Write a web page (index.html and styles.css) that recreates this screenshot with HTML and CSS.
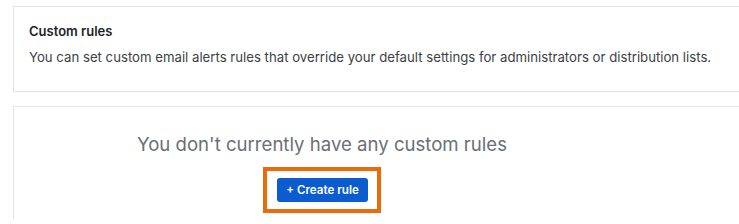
FILE: index.html
```html
<!DOCTYPE html>
<html lang="en">

<head>
    <meta charset="UTF-8">
    <title>Custom rules</title>
    <link rel="stylesheet" href="styles.css">
</head>

<body>
    <div class="page">
        <div class="card intro">
            <h4>Custom rules</h4>
            <p>You can set custom email alerts rules that override your default settings for administrators or distribution lists.</p>
        </div>

        <div class="card empty">
            <div class="empty-state">
                <h3>You don't currently have any custom rules</h3>
                <span class="highlight">
                    <button class="create-btn">+ Create rule</button>
                </span>
            </div>
        </div>
    </div>
</body>

</html>
```

FILE: styles.css
```css
body {
  margin: 0;
  background: #ffffff;
  font-family: 'Inter', 'Liberation Sans', sans-serif;
  overflow: hidden;
}

.page {
  padding: 6px 0 0 13px;
  height: 224px;
  box-sizing: border-box;
}

.card {
  border: 1px solid #e4e4e4;
  border-right: none;
  background: #fff;
}

/* top info card */
.intro {
  padding: 0 15px;
  box-sizing: border-box;
  height: 86px;
}

.intro h4 {
  margin: 16px 0 0;
  font-size: 13px;
  font-weight: 600;
  color: #1f2328;
  line-height: 16px;
}

.intro p {
  margin: 10px 0 0;
  font-size: 13.2px;
  color: #3b3f45;
  line-height: 17px;
  white-space: nowrap;
}

/* empty state card */
.empty {
  margin-top: 14px;
  height: 112px;
  border-bottom: none;
}

.empty-state {
  width: 616px;
  text-align: center;
}

.empty-state h3 {
  margin: 25px 0 0;
  font-size: 18.6px;
  font-weight: 400;
  color: #6b6f76;
  line-height: 24px;
}

.highlight {
  display: inline-block;
  margin-top: 11px;
  padding: 7px 9px 7px 10px;
  border: 4px solid #ea6a0c;
}

.create-btn {
  display: block;
  width: 91px;
  height: 24px;
  border: none;
  border-radius: 3px;
  background: #0b5ccf;
  color: #fff;
  font-family: inherit;
  font-size: 11.6px;
  font-weight: 600;
  padding: 0;
  cursor: pointer;
}
```
